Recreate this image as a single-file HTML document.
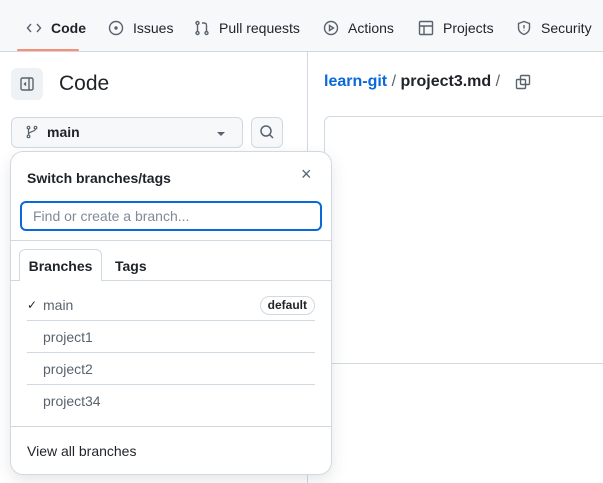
<!DOCTYPE html>
<html><head><style>
*{box-sizing:border-box;margin:0;padding:0}
body{width:603px;height:483px;overflow:hidden;background:#fff;font-family:"Liberation Sans",sans-serif;color:#1f2328;position:relative;font-size:14px}
.nav{position:absolute;left:0;top:0;width:603px;height:52px;background:#f6f8fa;border-bottom:1px solid #d1d9e0}
.ni{position:absolute;top:20px;font-size:14px;display:flex;align-items:center;gap:9px;color:#1f2328}
.ni svg{width:16px;height:16px;fill:none;stroke:#59636e;stroke-width:1.4}
.ul{position:absolute;left:17px;top:49px;width:62px;height:2px;background:#fd8c73;border-radius:2px}
.vd{position:absolute;left:307px;top:52px;width:1px;height:431px;background:#d1d9e0}
.abs{position:absolute}
.pop{position:absolute;left:11px;top:152px;width:320px;height:322px;background:#fff;border-radius:12px;box-shadow:0 0 0 1px #d1d9e0,0 6px 16px rgba(66,74,83,.15)}
.row{position:absolute;left:16px;width:288px;height:32px;border-bottom:1px solid #d1d9e0;font-size:14px;color:#59636e;padding-left:16px;line-height:32px}
</style></head><body>
<div class="nav">
 <div class="ni" style="left:26px"><svg viewBox="0 0 16 16"><path d="M5 4 1.5 8 5 12M11 4l3.5 4L11 12"/></svg><b style="font-weight:600">Code</b></div>
 <div class="ni" style="left:108px"><svg viewBox="0 0 16 16"><circle cx="8" cy="8" r="6.5"/><circle cx="8" cy="8" r="1" fill="#59636e"/></svg>Issues</div>
 <div class="ni" style="left:194px"><svg viewBox="0 0 16 16"><circle cx="3.5" cy="3" r="1.5"/><circle cx="3.5" cy="13" r="1.5"/><circle cx="12.5" cy="13" r="1.5"/><path d="M3.5 4.5v7M12.5 11.5V5.5Q12.5 3 10 3H8"/></svg>Pull requests</div>
 <div class="ni" style="left:323px"><svg viewBox="0 0 16 16"><circle cx="8" cy="8" r="6.5"/><path d="M6.5 5.5v5l4-2.5z"/></svg>Actions</div>
 <div class="ni" style="left:418px"><svg viewBox="0 0 16 16"><rect x="1.5" y="1.5" width="13" height="13" rx="1"/><path d="M1.5 6h13M6 6v8.5"/></svg>Projects</div>
 <div class="ni" style="left:516px"><svg viewBox="0 0 16 16"><path d="M8 1.5 2.5 3.5v4.5c0 3 2.5 5.5 5.5 6.5 3-1 5.5-3.5 5.5-6.5V3.5z"/><path d="M8 5v3.5M8 10.5v.5"/></svg>Security</div>
 <div class="ul"></div>
</div>
<div class="vd"></div>
<div class="abs" style="left:11px;top:68px;width:32px;height:32px;background:#eff2f5;border-radius:6px"><svg class="abs" style="left:8px;top:8px" width="16" height="16" viewBox="0 0 16 16" fill="none" stroke="#59636e" stroke-width="1.4"><rect x="2" y="2" width="12" height="12" rx="1.5"/><path d="M10 2v12"/><path d="M7 6.5 5.5 8 7 9.5" fill="#59636e"/></svg></div>
<div class="abs" style="left:59px;top:72px;font-size:21px">Code</div>
<div class="abs" style="left:11px;top:117px;width:232px;height:31px;background:#f6f8fa;border:1px solid #d1d9e0;border-radius:6px"></div>
<svg class="abs" style="left:25px;top:125px" width="14" height="14" viewBox="0 0 16 16" fill="none" stroke="#59636e" stroke-width="1.4"><circle cx="4" cy="3" r="1.5"/><circle cx="4" cy="13" r="1.5"/><circle cx="12" cy="3" r="1.5"/><path d="M4 4.5v7M12 4.5c0 3-8 3-8 6"/></svg>
<div class="abs" style="left:47px;top:124px;font-weight:600">main</div>
<div class="abs" style="left:217px;top:132px;width:0;height:0;border-left:4px solid transparent;border-right:4px solid transparent;border-top:4px solid #59636e"></div>
<div class="abs" style="left:251px;top:117px;width:32px;height:31px;background:#f6f8fa;border:1px solid #d1d9e0;border-radius:6px"></div>
<svg class="abs" style="left:259px;top:124px" width="16" height="16" viewBox="0 0 16 16" fill="none" stroke="#59636e" stroke-width="1.5"><circle cx="7" cy="7" r="5"/><path d="M10.5 10.5 14 14"/></svg>
<div class="abs" style="left:324px;top:73px;font-size:16px"><span style="color:#0969da;font-weight:600">learn-git</span> <span style="color:#59636e">/</span> <b style="font-weight:600">project3.md</b> <span style="color:#59636e">/</span></div>
<svg class="abs" style="left:515px;top:74px" width="16" height="16" viewBox="0 0 16 16" fill="none" stroke="#59636e" stroke-width="1.4"><rect x="1.5" y="5.5" width="9" height="9" rx="1"/><rect x="5.5" y="1.5" width="9" height="9" rx="1"/></svg>
<div class="abs" style="left:324px;top:116px;width:300px;height:248px;border:1px solid #d1d9e0;border-radius:6px"></div>
<div class="pop">
 <div class="abs" style="left:16px;top:18px;font-weight:600;font-size:14px">Switch branches/tags</div>
 <div class="abs" style="left:290px;top:12px;font-size:18px;color:#59636e">×</div>
 <div class="abs" style="left:9px;top:49px;width:302px;height:30px;border:2px solid #0969da;border-radius:6px;padding-left:11px;line-height:26px;color:#818b98;font-size:14px">Find or create a branch...</div>
 <div class="abs" style="left:0;top:88px;width:320px;height:1px;background:#d1d9e0"></div>
 <div class="abs" style="left:0;top:128px;width:320px;height:1px;background:#d1d9e0"></div>
 <div class="abs" style="left:8px;top:97px;width:83px;height:32px;border:1px solid #d1d9e0;border-bottom:none;border-radius:6px 6px 0 0;background:#fff;text-align:center;line-height:32px;font-weight:600">Branches</div>
 <div class="abs" style="left:104px;top:106px;font-weight:600">Tags</div>
 <div class="row" style="top:137px;color:#59636e"><span class="abs" style="left:0;color:#1f2328;font-size:12px">✓</span>main<span class="abs" style="right:0;top:7px;height:19px;line-height:17px;padding:0 7px;border:1px solid #d1d9e0;border-radius:10px;font-size:12px;font-weight:600;color:#1f2328">default</span></div>
 <div class="row" style="top:169px">project1</div>
 <div class="row" style="top:201px">project2</div>
 <div class="row" style="top:233px;border:none">project34</div>
 <div class="abs" style="left:0;top:274px;width:320px;height:1px;background:#d1d9e0"></div>
 <div class="abs" style="left:16px;top:291px;color:#1f2328">View all branches</div>
</div>
</body></html>
